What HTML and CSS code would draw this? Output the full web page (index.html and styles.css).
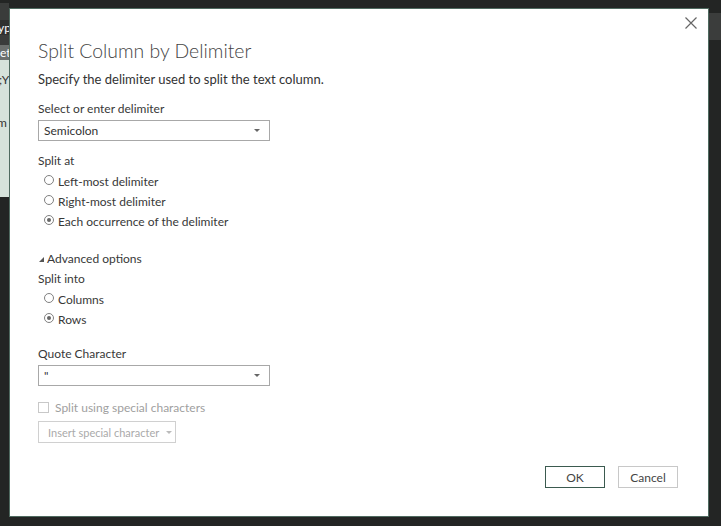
FILE: index.html
```html
<!DOCTYPE html>
<html>
<head>
<meta charset="utf-8">
<link rel="stylesheet" href="styles.css">
</head>
<body>
<div class="app">
  <div class="strip">
    <div class="s1"></div>
    <div class="s3">yp</div>
    <div class="s4"></div>
    <div class="s5">et</div>
    <div class="s6"><span class="t1">;Y</span><span class="t2">m</span></div>
  </div>
  <div class="rstrip"><div class="r1"></div></div>
</div>
<div class="dialog">
  <button class="close" aria-label="Close">
    <svg width="12" height="12" viewBox="0 0 12 12"><path d="M0.5 0.5 L11.5 11.5 M11.5 0.5 L0.5 11.5" stroke="#666" stroke-width="1.2" fill="none"/></svg>
  </button>
  <h1 class="title">Split Column by Delimiter</h1>
  <p class="sub">Specify the delimiter used to split the text column.</p>

  <div class="label l1">Select or enter delimiter</div>
  <div class="select"><span>Semicolon</span><span class="caret"></span></div>

  <div class="label l2">Split at</div>
  <div class="radios">
    <div class="radio"><span class="dot"></span>Left-most delimiter</div>
    <div class="radio"><span class="dot"></span>Right-most delimiter</div>
    <div class="radio"><span class="dot on"></span>Each occurrence of the delimiter</div>
  </div>

  <div class="adv"><span class="tri"></span>Advanced options</div>
  <div class="label l3">Split into</div>
  <div class="radios">
    <div class="radio"><span class="dot"></span>Columns</div>
    <div class="radio"><span class="dot on"></span>Rows</div>
  </div>

  <div class="label l4">Quote Character</div>
  <div class="select"><span>"</span><span class="caret"></span></div>

  <div class="check"><span class="box"></span>Split using special characters</div>
  <div class="insert">Insert special character<span class="caret light"></span></div>

  <div class="footer">
    <button class="btn ok">OK</button>
    <button class="btn">Cancel</button>
  </div>
</div>
</body>
</html>
```
FILE: styles.css
```css
html, body { margin: 0; padding: 0; }
body {
  width: 721px; height: 526px; overflow: hidden;
  background: #232524;
  font-family: Lato, "Open Sans", sans-serif;
  position: relative;
}
.app { display: flex; justify-content: space-between; height: 526px; }
.strip { width: 9px; display: flex; flex-direction: column; padding-top: 3px; overflow: hidden; }
.s1 { height: 17px; background: #3a3c3b; }
.s3 { height: 15px; background: #2f3130; color: #fff; font-size: 12px; line-height: 15px; white-space: nowrap; margin-left: -2px; }
.s4 { height: 10px; background: #3a3c3b; }
.s5 { height: 15px; background: #6c706e; color: #fff; font-size: 12px; line-height: 15px; white-space: nowrap; }
.s6 { height: 137px; background: #d6e2db; color: #333; font-size: 12px; position: relative; }
.t1 { position: absolute; left: -1px; top: 12px; }
.t2 { position: absolute; left: -3px; top: 55px; }
.rstrip { width: 12px; padding-top: 13px; }
.r1 { height: 27px; background: #3b3d3c; }

.dialog {
  position: absolute; left: 9px; top: 8px;
  width: 700px; height: 509px;
  background: #fff; border: 1px solid #4f6a60;
  padding: 0 0 0 28px; box-sizing: border-box;
  color: #333; font-size: 12px;
}
.close {
  position: absolute; right: 11px; top: 8px;
  border: 0; background: none; padding: 0; width: 12px; height: 12px;
}
.title {
  margin: 28px 0 0 0; font-size: 19.4px; font-weight: 300; color: #444;
  line-height: 28px;
}
.sub { margin: 5px 0 0 0; font-size: 13px; line-height: 18px; color: #333; }
.label { font-size: 12px; line-height: 16px; color: #383838; }
.l1 { margin-top: 13px; }
.l2 { margin-top: 12px; }
.l3 { margin-top: 4px; }
.l4 { margin-top: 17px; }
.select {
  width: 232px; height: 21px; box-sizing: border-box;
  border: 1px solid #a8a8a8; margin-top: 3px;
  display: flex; align-items: center; justify-content: space-between;
  padding: 0 9px 0 5px; font-size: 12px;
}
.caret {
  width: 0; height: 0; border-left: 3px solid transparent; border-right: 3px solid transparent;
  border-top: 3px solid #666;
}
.caret.light { border-top-color: #bbb; margin-left: 7px; }
.radios { margin-top: 2px; }
.radio { display: flex; align-items: center; height: 20px; padding-left: 6px; font-size: 12px; white-space: nowrap; color: #383838; }
.dot {
  width: 10px; height: 10px; border-radius: 50%; border: 1px solid #808080; margin-right: 4px;
  box-sizing: border-box; position: relative; top: -1px; background: #fff;
}
.dot.on::after {
  content: ""; position: absolute; left: 2px; top: 2px; width: 4px; height: 4px; border-radius: 50%; background: #666;
}
.adv { margin-top: 20px; display: flex; align-items: center; font-size: 12px; line-height: 16px; color: #383838; }
.tri {
  width: 0; height: 0; border-left: 5px solid transparent; border-bottom: 5px solid #555;
  margin-right: 3px; margin-left: 1px;
}
.check { display: flex; align-items: center; margin-top: 14px; color: #a0a0a0; font-size: 12px; height: 14px; white-space: nowrap; }
.box { width: 11px; height: 11px; border: 1px solid #c8c8c8; box-sizing: border-box; margin-right: 6px; }
.insert {
  margin-top: 7px; width: 138px; height: 22px; box-sizing: border-box; border: 1px solid #d0d0d0;
  display: flex; align-items: center; padding-left: 9px; font-size: 11px; color: #aaa; white-space: nowrap;
}
.footer { position: absolute; right: 30px; bottom: 28px; display: flex; gap: 13px; }
.btn {
  width: 60px; height: 22px; box-sizing: border-box; background: #fff;
  border: 1px solid #c8c8c8; font-family: inherit; font-size: 12px; color: #444; padding: 0;
}
.btn.ok { border: 1px solid #3b5a4f; }
```
